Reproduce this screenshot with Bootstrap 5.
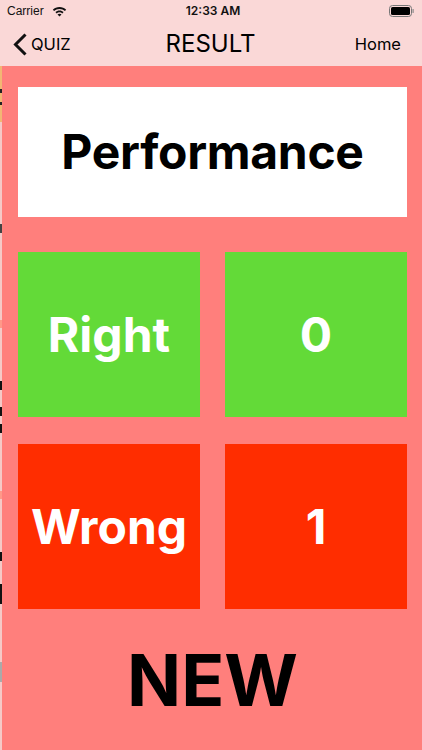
<!DOCTYPE html>
<html lang="en"><head><meta charset="utf-8">
<link href="https://cdn.jsdelivr.net/npm/bootstrap@5.3.0/dist/css/bootstrap.min.css" rel="stylesheet">
<style>
html,body{margin:0;height:750px;overflow:hidden}
body{font-family:Inter,"Liberation Sans",sans-serif;background:#fff;color:#000}
.phone{width:422px;height:750px}
.topbar{background:#fad8d7;height:66px;flex:none}
.statusline{height:22px;padding:0 8px 0 7px;font-size:12px;color:#111;font-family:"Liberation Sans",sans-serif}
.statusside{width:120px}
.clock{font-family:Inter,sans-serif;font-weight:600;font-size:12px;padding-left:5px}
.navline{height:44px;padding:0 21px 0 13px}
.navside{width:100px;font-size:16.5px}
.navback{width:107px;gap:4px;font-size:16.5px}
.navtitle{font-size:24px}
.stage{background:#ff7f7c;flex:1;margin-left:2px;padding:21px 15px 0 16px;position:relative}
.edgebits{position:absolute;left:-2px;top:0;width:2px;height:100%;background:#f5c9c7}
.edgebit{position:absolute;left:0;width:2px}
.headbox{height:130px;background:#fff;font-size:48px;font-weight:700;letter-spacing:-.3px;margin-bottom:35px}
.tiles{display:grid;grid-template-columns:182px 182px;column-gap:25px;row-gap:27px}
.tile{height:165px;color:#fff;font-weight:700;font-size:48px}
.okay{background:#63da38}
.bad{background:#ff2d00}
.newword{font-size:71px;font-weight:700;height:142px;color:#000}
</style></head><body>
<div class="phone d-flex flex-column">
<header class="topbar d-flex flex-column">
<div class="statusline d-flex align-items-center justify-content-between">
<div class="statusside d-flex align-items-center gap-2"><span>Carrier</span>
<svg width="15" height="11" viewBox="0 0 15 11"><path d="M7.5 1C4.9 1 2.6 2 .8 3.7l1.3 1.4C3.5 3.7 5.4 2.9 7.5 2.9s4 .8 5.4 2.2l1.3-1.4C12.4 2 10.1 1 7.5 1zM7.5 4.4c-1.6 0-3 .6-4.1 1.7l1.3 1.3c.8-.7 1.7-1.1 2.8-1.1s2 .4 2.8 1.1l1.3-1.3C10.5 5 9.1 4.4 7.5 4.4zM7.5 7.7c-.8 0-1.5.3-2 .8l2 2.1 2-2.1c-.5-.5-1.2-.8-2-.8z" fill="#111"/></svg></div>
<span class="clock">12:33 AM</span>
<div class="statusside d-flex justify-content-end">
<svg width="25" height="12" viewBox="0 0 25 12"><rect x=".5" y=".5" width="22" height="11" rx="3" fill="none" stroke="#777"/><rect x="2" y="2" width="19" height="8" rx="1.6" fill="#000"/><rect x="23.5" y="4" width="1.2" height="4" rx=".6" fill="#888"/></svg></div>
</div>
<div class="navline d-flex align-items-center justify-content-between">
<div class="navback d-flex align-items-center">
<svg width="14" height="23" viewBox="0 0 14 23"><path d="M12.5 1.5 2.5 11.5l10 10" fill="none" stroke="#111" stroke-width="3"/></svg><span>QUIZ</span></div>
<span class="navtitle">RESULT</span>
<div class="navside text-end">Home</div>
</div>
</header>
<main class="stage">
<div class="edgebits">
<i class="edgebit" style="top:0;height:56px;background:#f2b774"></i>
<i class="edgebit" style="top:23px;height:4px;background:#222"></i>
<i class="edgebit" style="top:36px;height:3px;background:#222"></i>
<i class="edgebit" style="top:158px;height:9px;background:#444"></i>
<i class="edgebit" style="top:254px;height:8px;background:#f98"></i>
<i class="edgebit" style="top:315px;height:9px;background:#111"></i>
<i class="edgebit" style="top:341px;height:9px;background:#111"></i>
<i class="edgebit" style="top:358px;height:9px;background:#111"></i>
<i class="edgebit" style="top:425px;height:8px;background:#f98"></i>
<i class="edgebit" style="top:486px;height:9px;background:#111"></i>
<i class="edgebit" style="top:518px;height:20px;background:#111"></i>
<i class="edgebit" style="top:596px;height:20px;background:#aaa"></i>
</div>
<div class="headbox d-flex align-items-center justify-content-center">Performance</div>
<div class="tiles">
<div class="tile okay d-flex align-items-center justify-content-center">Right</div>
<div class="tile okay d-flex align-items-center justify-content-center">0</div>
<div class="tile bad d-flex align-items-center justify-content-center">Wrong</div>
<div class="tile bad d-flex align-items-center justify-content-center">1</div>
</div>
<div class="newword d-flex align-items-center justify-content-center">NEW</div>
</main>
</div>
</body></html>
